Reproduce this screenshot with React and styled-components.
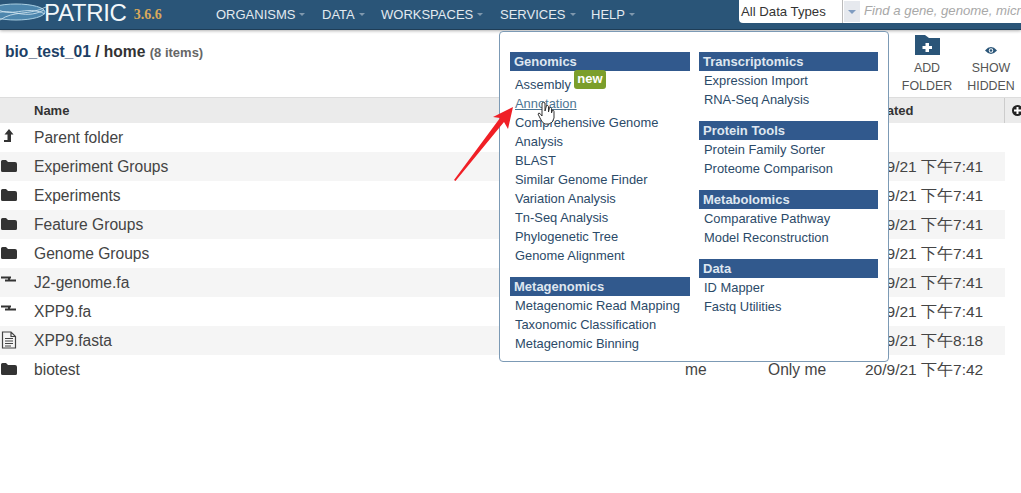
import styled, { createGlobalStyle } from 'styled-components';

const GlobalStyle = createGlobalStyle`
  html, body {
    margin: 0;
    padding: 0;
    background: #fff;
    overflow: hidden;
  }
  body {
    font-family: "Liberation Sans", Arial, sans-serif;
    color: #333;
  }
`;

const navItems = [
  { label: 'ORGANISMS', width: 106 },
  { label: 'DATA', width: 59 },
  { label: 'WORKSPACES', width: 119 },
  { label: 'SERVICES', width: 91 },
  { label: 'HELP', width: 60 },
];

const rows = [
  { name: 'Parent folder', icon: 'up' },
  { name: 'Experiment Groups', icon: 'folder', date: '20/9/21 下午7:41' },
  { name: 'Experiments', icon: 'folder', date: '20/9/21 下午7:41' },
  { name: 'Feature Groups', icon: 'folder', date: '20/9/21 下午7:41' },
  { name: 'Genome Groups', icon: 'folder', date: '20/9/21 下午7:41' },
  { name: 'J2-genome.fa', icon: 'genome', date: '20/9/21 下午7:41' },
  { name: 'XPP9.fa', icon: 'genome', date: '20/9/21 下午7:41' },
  { name: 'XPP9.fasta', icon: 'doc', date: '20/9/21 下午8:18' },
  { name: 'biotest', icon: 'folder', owner: 'me', members: 'Only me', date: '20/9/21 下午7:42' },
];

const leftMenu = [
  {
    title: 'Genomics',
    links: ['Assembly', 'Annotation', 'Comprehensive Genome Analysis', 'BLAST', 'Similar Genome Finder', 'Variation Analysis', 'Tn-Seq Analysis', 'Phylogenetic Tree', 'Genome Alignment'],
  },
  {
    title: 'Metagenomics',
    links: ['Metagenomic Read Mapping', 'Taxonomic Classification', 'Metagenomic Binning'],
  },
];

const rightMenu = [
  { title: 'Transcriptomics', links: ['Expression Import', 'RNA-Seq Analysis'] },
  { title: 'Protein Tools', links: ['Protein Family Sorter', 'Proteome Comparison'] },
  { title: 'Metabolomics', links: ['Comparative Pathway', 'Model Reconstruction'] },
  { title: 'Data', links: ['ID Mapper', 'Fastq Utilities'] },
];

const RowIcon = ({ type }) => {
  if (type === 'up') {
    return (
      <svg width="16" height="16" viewBox="0 0 16 16">
        <path d="M8 0 L12.5 5.5 H10 V13 H3 V11 H6.5 V5.5 H3.5 Z" fill="#333" />
      </svg>
    );
  }
  if (type === 'genome') {
    return (
      <svg width="16" height="16" viewBox="0 0 16 16">
        <path d="M0 2.5 H10 V4.5 H9 V5.5 H15 V7.5 H4 V5.5 H7 V4.5 H0 Z" fill="#333" />
      </svg>
    );
  }
  if (type === 'doc') {
    return (
      <svg width="16" height="18" viewBox="0 0 16 18">
        <path d="M1.5 1 H10 L14.5 5.5 V17 H1.5 Z M10 1 V5.5 H14.5" fill="none" stroke="#444" strokeWidth="1.2" />
        <path d="M4 7.5 H12 M4 10 H12 M4 12.5 H12 M4 15 H10" stroke="#444" strokeWidth="1" />
      </svg>
    );
  }
  return (
    <svg width="16" height="14" viewBox="0 0 16 14">
      <path d="M0 2.5 Q0 1 1.5 1 H5 L7 3 H14 Q16 3 16 5 V11.5 Q16 13 14.5 13 H1.5 Q0 13 0 11.5 Z" fill="#333" />
    </svg>
  );
};

export default function App() {
  return (
    <Page>
      <GlobalStyle />
      <Navbar>
        <Logo>
          <svg width="46" height="22" viewBox="0 0 46 22">
            <ellipse cx="16" cy="12" rx="29" ry="8" fill="#4d86ad" stroke="#a9cfe3" strokeWidth="1" />
            <path d="M-8 16 C8 4 22 22 44 10 M-6 7 C10 20 26 4 45 14 M0 20 C14 10 28 16 46 7" fill="none" stroke="#d5e9f3" strokeWidth="0.8" />
          </svg>
          <LogoName>PATRIC</LogoName>
          <Version>3.6.6</Version>
        </Logo>
        <NavList>
          {navItems.map(item => (
            <NavItem key={item.label} $width={item.width}>
              {item.label}
              <Caret />
            </NavItem>
          ))}
        </NavList>
        <SearchBox>
          <TypeSelect>All Data Types</TypeSelect>
          <SelectButton>
            <SelectArrow />
          </SelectButton>
          <SearchHint>Find a gene, genome, microbe</SearchHint>
        </SearchBox>
      </Navbar>

      <Toolbar>
        <Title>
          <TitleLink>bio_test_01</TitleLink> / home <Count>(8 items)</Count>
        </Title>
        <Actions>
          <Action>
            <svg width="25" height="20" viewBox="0 0 25 20">
              <path d="M0 0 H10 L14 3 H25 V20 H0 Z" fill="#2a5578" />
              <path d="M10.5 8 H14 V11 H17 V14 H14 V17 H10.5 V14 H7.5 V11 H10.5 Z" fill="#fff" />
            </svg>
            <span>ADD<br />FOLDER</span>
          </Action>
          <Action>
            <svg width="12" height="9" viewBox="0 0 14 10">
              <path d="M0 5 Q7 -3 14 5 Q7 13 0 5 Z" fill="#2a5578" />
              <circle cx="7" cy="5" r="2.6" fill="#fff" />
              <circle cx="7" cy="5" r="1.5" fill="#2a5578" />
            </svg>
            <span>SHOW<br />HIDDEN</span>
          </Action>
        </Actions>
      </Toolbar>

      <HeaderRow>
        <Grid>
          <span />
          <HeaderCell>Name</HeaderCell>
          <span />
          <span />
          <HeaderCell>Created</HeaderCell>
        </Grid>
        <AddColumn>
          <svg width="11" height="11" viewBox="0 0 11 11">
            <circle cx="5.5" cy="5.5" r="5.5" fill="#222" />
            <path d="M4.5 2 H6.5 V4.5 H9 V6.5 H6.5 V9 H4.5 V6.5 H2 V4.5 H4.5 Z" fill="#fff" />
          </svg>
        </AddColumn>
      </HeaderRow>

      <Rows>
        {rows.map((row, i) => (
          <Row key={row.name} $shaded={i % 2 === 1}>
            <IconCell><RowIcon type={row.icon} /></IconCell>
            <span>{row.name}</span>
            <span>{row.owner}</span>
            <span>{row.members}</span>
            <DateCell>{row.date}</DateCell>
          </Row>
        ))}
      </Rows>

      <Menu>
        <MenuColumn>
          {leftMenu.map(group => (
            <MenuGroup key={group.title}>
              <MenuTitle>{group.title}</MenuTitle>
              {group.links.map(link => (
                <MenuLink key={link} $active={link === 'Annotation'} $badged={link === 'Assembly'}>
                  {link}
                  {link === 'Assembly' && <NewBadge>new</NewBadge>}
                </MenuLink>
              ))}
            </MenuGroup>
          ))}
        </MenuColumn>
        <MenuColumn>
          {rightMenu.map(group => (
            <MenuGroup key={group.title}>
              <MenuTitle>{group.title}</MenuTitle>
              {group.links.map(link => (
                <MenuLink key={link}>{link}</MenuLink>
              ))}
            </MenuGroup>
          ))}
        </MenuColumn>
      </Menu>

      <RedArrow width="70" height="90" viewBox="0 0 70 90">
        <path d="M0 80 L46 18 L39 17 L59 7 L54 29 L50 22 L1.5 81 Z" fill="#f01f26" />
      </RedArrow>
      <Pointer width="18" height="24" viewBox="0 0 18 24">
        <path
          d="M5 2 Q6.5 0.5 8 2 V10 L9.5 4.5 Q11 4 11.5 5.5 V11 L12.5 6.5 Q14 6 14.5 7.5 V12 L15.5 9 Q17 9 17 10.5 V17 Q16 22 12 23 H8 Q5 22 3 17 L1 13 Q1.5 11.5 3 12.5 L5 15 Z"
          fill="#fff"
          stroke="#333"
          strokeWidth="1"
        />
      </Pointer>
    </Page>
  );
}

const Page = styled.div`
  position: relative;
  width: 1021px;
  height: 493px;
  overflow: hidden;
  background: #fff;
`;

const Navbar = styled.header`
  display: flex;
  align-items: flex-start;
  height: 29px;
  background: #2a5578;
  border-bottom: 1px solid #1e3d57;
  box-shadow: 0 1px 3px rgba(0, 0, 0, 0.3);
`;

const Logo = styled.div`
  display: flex;
  align-items: flex-start;
  width: 216px;
  flex: none;
  svg {
    flex: none;
    margin-right: -2px;
  }
`;

const LogoName = styled.span`
  color: #f2f7fa;
  font-size: 24px;
  line-height: 24px;
  letter-spacing: -0.3px;
  margin-top: 1px;
`;

const Version = styled.span`
  color: #d9a95b;
  font-family: "Liberation Serif", serif;
  font-weight: bold;
  font-size: 14px;
  line-height: 14px;
  margin: 8px 0 0 7px;
`;

const NavList = styled.nav`
  display: flex;
  flex: none;
  width: 523px;
`;

const NavItem = styled.div`
  display: flex;
  align-items: center;
  width: ${p => p.$width}px;
  flex: none;
  height: 28px;
  color: #e3eaf0;
  font-size: 13px;
`;

const Caret = styled.i`
  width: 0;
  height: 0;
  margin-left: 4px;
  border-left: 3px solid transparent;
  border-right: 3px solid transparent;
  border-top: 3px solid #7f98ad;
`;

const SearchBox = styled.div`
  display: flex;
  align-items: center;
  flex: 1;
  height: 23px;
  background: #fff;
  border-bottom-left-radius: 4px;
  overflow: hidden;
  white-space: nowrap;
`;

const TypeSelect = styled.div`
  width: 101px;
  padding-left: 2px;
  flex: none;
  font-size: 13.2px;
  color: #333;
  border-right: 1px solid #bbb;
  line-height: 23px;
`;

const SelectButton = styled.div`
  display: flex;
  align-items: center;
  justify-content: center;
  width: 16px;
  height: 21px;
  margin-left: 1px;
  flex: none;
  background: #e6e9ee;
`;

const SelectArrow = styled.i`
  border-left: 4px solid transparent;
  border-right: 4px solid transparent;
  border-top: 4px solid #7f9cc0;
`;

const SearchHint = styled.div`
  margin: -3px 0 0 4px;
  font-size: 13.2px;
  font-style: italic;
  color: #a8a8a8;
`;

const Toolbar = styled.div`
  display: flex;
  justify-content: space-between;
  height: 67px;
  padding: 0 0 0 5px;
`;

const Title = styled.div`
  margin-top: 13px;
  font-size: 15.6px;
  font-weight: bold;
  color: #333;
  line-height: 18px;
`;

const TitleLink = styled.span`
  color: #1d3f66;
`;

const Count = styled.span`
  font-size: 13px;
  color: #666;
`;

const Actions = styled.div`
  display: flex;
  margin-right: -2px;
  padding-top: 5px;
`;

const Action = styled.div`
  display: flex;
  flex-direction: column;
  align-items: center;
  justify-content: flex-end;
  width: 64px;
  height: 60px;
  font-size: 12.4px;
  line-height: 18px;
  text-align: center;
  color: #555;
  svg {
    margin-bottom: 4px;
  }
`;

const Grid = styled.div`
  display: grid;
  grid-template-columns: 34px 651px 83px 97px 1fr;
  align-items: center;
  width: 1005px;
  flex: none;
`;

const HeaderRow = styled.div`
  display: flex;
  align-items: center;
  height: 25px;
  background: #ebebeb;
  border-top: 1px solid #ddd;
`;

const HeaderCell = styled.span`
  font-size: 13px;
  font-weight: bold;
  color: #333;
  white-space: nowrap;
`;

const AddColumn = styled.div`
  display: flex;
  align-items: center;
  height: 100%;
  padding-left: 7px;
  border-left: 1px solid #ccc;
  margin-left: -1px;
`;

const Rows = styled.div`
  width: 1005px;
`;

const Row = styled(Grid)`
  height: 29px;
  font-size: 15.6px;
  color: #444;
  white-space: nowrap;
  background: ${p => (p.$shaded ? '#f5f5f5' : '#fff')};
`;

const IconCell = styled.span`
  display: flex;
  align-items: center;
  padding: 0 0 2px 1px;
`;

const DateCell = styled.span`
  padding-top: 1px;
  font-size: 15.5px;
`;

const Menu = styled.div`
  position: absolute;
  left: 499px;
  top: 31px;
  display: grid;
  grid-template-columns: 180px 179px;
  column-gap: 9px;
  align-items: start;
  box-sizing: border-box;
  width: 390px;
  height: 331px;
  padding: 20px 10px 0 10px;
  background: #fff;
  border: 1px solid #7c9ab5;
  border-radius: 4px;
`;

const MenuColumn = styled.div`
  display: flex;
  flex-direction: column;
  gap: 12px;
`;

const MenuGroup = styled.div`
  display: flex;
  flex-direction: column;
`;

const MenuTitle = styled.div`
  height: 19px;
  padding-left: 4px;
  background: #31598d;
  color: #dfe7f0;
  font-size: 13px;
  font-weight: bold;
  line-height: 19px;
`;

const MenuLink = styled.div`
  position: relative;
  align-self: flex-start;
  margin-top: ${p => (p.$badged ? '4px' : '0')};
  padding-left: 5px;
  font-size: 12.9px;
  line-height: 19px;
  color: ${p => (p.$active ? '#4c7693' : '#2b4a68')};
  text-decoration: ${p => (p.$active ? 'underline' : 'none')};
`;

const NewBadge = styled.span`
  position: absolute;
  left: 64px;
  top: -5px;
  width: 32px;
  height: 19px;
  background: #7b9e2b;
  color: #fff;
  border-radius: 3px;
  font-size: 13px;
  font-weight: bold;
  line-height: 17px;
  text-align: center;
`;

const Pointer = styled.svg`
  position: absolute;
  left: 537px;
  top: 101px;
`;

const RedArrow = styled.svg`
  position: absolute;
  left: 454px;
  top: 100px;
`;
